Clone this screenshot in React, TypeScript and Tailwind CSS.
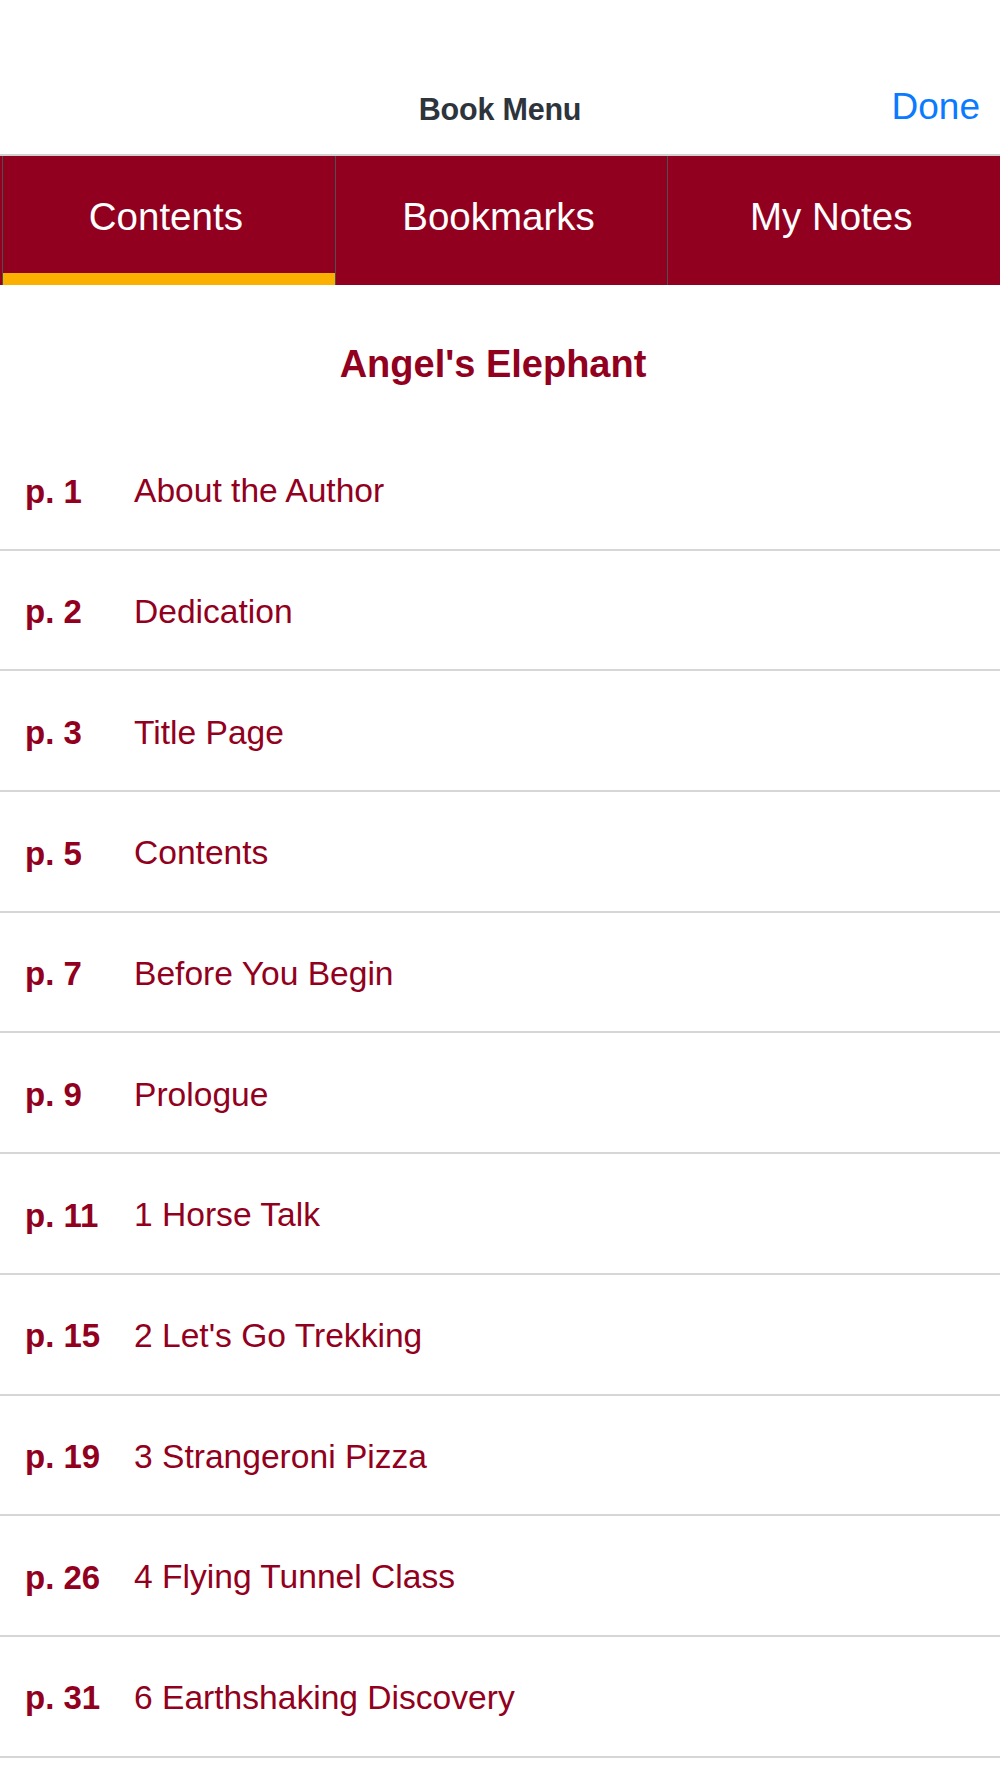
import React from 'react';

const entries: { page: string; title: string }[] = [
  { page: 'p. 1', title: 'About the Author' },
  { page: 'p. 2', title: 'Dedication' },
  { page: 'p. 3', title: 'Title Page' },
  { page: 'p. 5', title: 'Contents' },
  { page: 'p. 7', title: 'Before You Begin' },
  { page: 'p. 9', title: 'Prologue' },
  { page: 'p. 11', title: '1 Horse Talk' },
  { page: 'p. 15', title: "2 Let's Go Trekking" },
  { page: 'p. 19', title: '3 Strangeroni Pizza' },
  { page: 'p. 26', title: '4 Flying Tunnel Class' },
  { page: 'p. 31', title: '6 Earthshaking Discovery' },
];

const tabs = ['Contents', 'Bookmarks', 'My Notes'];

const App: React.FC = () => {
  return (
    <div
      className="w-[1000px] min-h-[1778px] bg-white"
      style={{ fontFamily: '"Liberation Sans", Arial, sans-serif' }}
    >
      {/* Nav bar */}
      <header className="h-[154px] pt-[65px]">
        <div className="relative h-[89px] flex items-center justify-center">
          <h1 className="text-[30.5px] font-bold text-[#2e343c] tracking-[-0.2px]">Book Menu</h1>
          <button className="absolute right-[20px] top-[23px] text-[37px] leading-none text-[#0a7aff]">
            Done
          </button>
        </div>
      </header>

      {/* Tabs */}
      <nav className="h-[131px] border-t-2 border-[#d0d0d0] bg-[#920020] flex">
        {tabs.map((tab, i) => (
          <div
            key={tab}
            className={`relative flex-1 flex items-center justify-center border-l border-[#4e4e55] pr-[6px] ${
              i === 0 ? 'ml-[2px]' : ''
            }`}
          >
            <span className="text-[38.5px] text-white pb-[8px]">{tab}</span>
            {i === 0 && <div className="absolute left-0 right-0 bottom-0 h-[12px] bg-[#fbb000]" />}
          </div>
        ))}
      </nav>

      {/* Book title */}
      <div className="h-[145px] flex items-center justify-center pt-[14px] pr-[14px]">
        <h2 className="text-[38px] font-bold text-[#920020]">Angel's Elephant</h2>
      </div>

      {/* Contents list */}
      <ul>
        {entries.map((e) => (
          <li
            key={e.page}
            className="h-[120.7px] border-b-2 border-[#d6d6d6] flex items-center text-[#920020] pt-[4px]"
          >
            <span className="w-[134px] pl-[25px] text-[33px] font-bold">{e.page}</span>
            <span className="text-[33.6px]">{e.title}</span>
          </li>
        ))}
      </ul>
    </div>
  );
};

export default App;
